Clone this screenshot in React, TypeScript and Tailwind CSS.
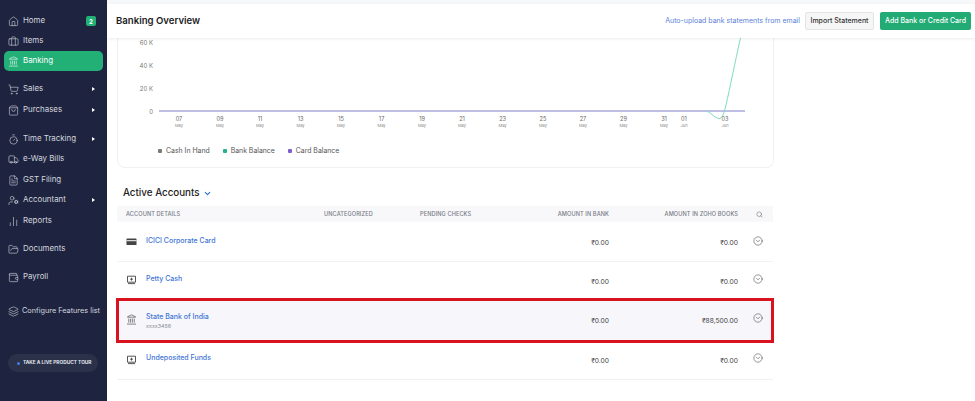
import React from "react";
import {
  Home, Briefcase, Landmark, ShoppingCart, ShoppingBag, Timer, Truck, FileText, UserCog,
  ChartNoAxesColumn, FolderOpen, Wallet, Layers, ChevronDown, Search, CircleChevronDown,
} from "lucide-react";

const nav = [
  { label: "Home", icon: Home, mt: "mt-[10px]", badge: true },
  { label: "Items", icon: Briefcase, mt: "mt-0" },
  { label: "Banking", icon: Landmark, mt: "mt-0", active: true },
  { label: "Sales", icon: ShoppingCart, mt: "mt-[8px]", arrow: true },
  { label: "Purchases", icon: ShoppingBag, mt: "mt-[1px]", arrow: true },
  { label: "Time Tracking", icon: Timer, mt: "mt-[9px]", arrow: true },
  { label: "e-Way Bills", icon: Truck, mt: "mt-0" },
  { label: "GST Filing", icon: FileText, mt: "mt-[1px]" },
  { label: "Accountant", icon: UserCog, mt: "mt-0", arrow: true },
  { label: "Reports", icon: ChartNoAxesColumn, mt: "mt-[1px]" },
  { label: "Documents", icon: FolderOpen, mt: "mt-[8px]" },
  { label: "Payroll", icon: Wallet, mt: "mt-[8px]" },
  { label: "Configure Features list", icon: Layers, mt: "mt-[14px]", small: true },
];

function Sidebar() {
  return (
    <aside className="w-[107px] h-full shrink-0 bg-[#1e2440] px-[4px] pt-[1px] flex flex-col text-[#d3d6df]">
      {nav.map((n) => {
        const I = n.icon;
        return (
          <div
            key={n.label}
            className={`${n.mt} h-[20px] flex items-center pl-[4px] pr-[7px] rounded-[5px] ${n.small ? "text-[7.3px]" : "text-[7.9px]"} whitespace-nowrap ${n.active ? "bg-[#22b077] text-white" : ""}`}
          >
            <I size={11} strokeWidth={1.3} className="shrink-0" />
            <span className={`${n.small ? "ml-[3px]" : "ml-[4px]"} flex-1`}>{n.label}</span>
            {n.badge && (
              <span className="w-[10px] h-[10px] rounded-[2px] bg-[#22b077] text-white text-[6px] font-bold flex items-center justify-center">2</span>
            )}
            {n.arrow && <span className="w-0 h-0 mr-[1px] border-y-[2px] border-y-transparent border-l-[3px] border-l-white" />}
          </div>
        );
      })}
      <div className="mt-[33px] mx-[4px] h-[18px] w-[90px] rounded-full bg-[#2a3149] flex items-center pl-[9px] text-[4.8px] font-bold text-[#e3e6ee] whitespace-nowrap">
        <span className="w-[3px] h-[3px] rounded-full bg-[#3f7fe8] mr-[3px]" />
        TAKE A LIVE PRODUCT TOUR
      </div>
    </aside>
  );
}

function Chart() {
  const labels = [
    [178, "07", "May"], [219, "09", "May"], [259, "11", "May"], [299.6, "13", "May"], [340, "15", "May"],
    [380.6, "17", "May"], [421, "19", "May"], [461, "21", "May"], [501.6, "23", "May"], [542, "25", "May"],
    [582, "27", "May"], [622.5, "29", "May"], [663, "31", "May"], [683, "01", "Jun"], [724, "03", "Jun"],
  ] as const;
  return (
    <svg viewBox="117 38 656 92" width="656" height="92" className="block">
      {[["60 K", 45], ["40 K", 68], ["20 K", 91], ["0", 114]].map(([t, y]) => (
        <text key={t as string} x="152" y={y as number} textAnchor="end" fontSize="6" fill="#777">{t}</text>
      ))}
      <path d="M158 111H744" stroke="#7f7cc9" strokeWidth="1" fill="none" />
      <path d="M706 111C711 114 714 118 718 118.5C721 118.8 723 114 725 105C729 88 734 62 739.5 38" stroke="#7fdcbc" strokeWidth="1" fill="none" />
      {labels.map(([x, d, m]) => (
        <g key={d + m}>
          <text x={x} y="121" textAnchor="middle" fontSize="5.6" fill="#666">{d}</text>
          <text x={x} y="127" textAnchor="middle" fontSize="4" fill="#888">{m}</text>
        </g>
      ))}
    </svg>
  );
}

function CashIcon() {
  return (
    <svg width="11" height="11" viewBox="0 0 11 11" fill="none" stroke="#444" strokeWidth="0.9">
      <path d="M1.5 2.2H9.5V8.2H1.5Z" />
      <path d="M2 9.6H9" />
      <path d="M5.5 3.8V6.6M4.1 5.2H6.9" />
    </svg>
  );
}

function CardIcon() {
  return (
    <svg width="11" height="11" viewBox="0 0 11 11">
      <rect x="0.5" y="2.5" width="10" height="6.5" rx="0.6" fill="#444" />
      <rect x="0.5" y="4.2" width="10" height="1" fill="#fff" />
    </svg>
  );
}

const rows = [
  { name: "ICICI Corporate Card", kind: "card", box: "h-[40px] pt-[13px] border-b border-[#f0f1f4]", iconMt: "mt-[1px]", amtMt: "mt-[2px]", chevMt: "mt-[1px]", bank: "₹0.00", books: "₹0.00" },
  { name: "Petty Cash", kind: "cash", box: "h-[36px] pt-[11px]", iconMt: "mt-[1px]", amtMt: "mt-[3px]", chevMt: "mt-[1px]", bank: "₹0.00", books: "₹0.00" },
  { name: "State Bank of India", sub: "xxxx3456", kind: "bank", box: "h-[43px] my-px pt-[12px] outline-[3px] outline-offset-[-2px] outline-[#d8121f] bg-[#f6f6fb]", iconMt: "mt-[3px]", amtMt: "mt-[4px]", chevMt: "mt-[2px]", bank: "₹0.00", books: "₹88,500.00" },
  { name: "Undeposited Funds", kind: "cash", box: "h-[37px] pt-[9px] border-b border-[#f0f1f4]", iconMt: "mt-[2px]", amtMt: "mt-[3px]", chevMt: "mt-[1px]", bank: "₹0.00", books: "₹0.00" },
];

function RowIcon({ kind }: { kind: string }) {
  if (kind === "card") return <CardIcon />;
  if (kind === "bank") return <Landmark size={11} strokeWidth={1.3} className="text-[#333]" />;
  return <CashIcon />;
}

const grid = "grid grid-cols-[207px_96px_110px_79px_129px_35px]";

function Table() {
  return (
    <div className="w-[656px] mt-[6px]">
      <div className={`${grid} h-[16px] items-center bg-[#f8f8fa] text-[5.6px] font-medium text-[#777b85] tracking-[0.1px]`}>
        <div className="pl-[9px]">ACCOUNT DETAILS</div>
        <div>UNCATEGORIZED</div>
        <div>PENDING CHECKS</div>
        <div className="text-right">AMOUNT IN BANK</div>
        <div className="text-right">AMOUNT IN ZOHO BOOKS</div>
        <div className="flex justify-center pl-[8px]"><Search size={7} className="text-[#777]" /></div>
      </div>
      {rows.map((r) => (
        <div key={r.name} className={`${grid} ${r.box}`}>
          <div className="flex items-start pl-[9px]">
            <span className={`${r.iconMt} w-[20px]`}><RowIcon kind={r.kind} /></span>
            <div className="leading-[12px]">
              <div className="text-[7px] font-medium text-[#3f75d6] whitespace-nowrap">{r.name}</div>
              {r.sub && <div className="text-[5.4px] leading-[7px] text-[#8a8d96]">{r.sub}</div>}
            </div>
          </div>
          <div />
          <div />
          <div className={`${r.amtMt} text-right text-[6.7px] leading-[12px] text-[#444]`}>{r.bank}</div>
          <div className={`${r.amtMt} text-right text-[6.7px] leading-[12px] text-[#444]`}>{r.books}</div>
          <div className="flex justify-center pl-[5px]">
            <CircleChevronDown size={10} strokeWidth={1.2} className={`${r.chevMt} text-[#333]`} />
          </div>
        </div>
      ))}
    </div>
  );
}

export default function App() {
  return (
    <div className="w-[975px] h-[401px] overflow-hidden flex bg-white font-['Inter','Noto_Sans',sans-serif]">
      <Sidebar />
      <main className="flex-1 min-w-0 flex flex-col">
        <div className="h-[4px] bg-[#f7f8fa]" />
        <header className="relative z-10 h-[34px] flex items-center pl-[9px] pr-[4px] bg-white shadow-[0_1px_3px_rgba(0,0,0,0.08)]">
          <h1 className="text-[9.6px] font-semibold text-[#1c1c24] flex-1">Banking Overview</h1>
          <a className="text-[7px] text-[#5b82d8] mr-[5px]">Auto-upload bank statements from email</a>
          <button className="w-[69px] h-[18px] rounded-[2px] bg-[#f6f6f6] border border-[#e4e4e6] text-[7px] font-medium text-[#333]">Import Statement</button>
          <button className="ml-[6px] w-[91px] h-[18px] rounded-[2px] bg-[#22ab75] text-[7px] font-medium text-white">Add Bank or Credit Card</button>
        </header>
        <div className="pl-[10px]">
          <section className="w-[657px] h-[130px] border border-t-0 border-[#f1f1f4] rounded-b-[8px]">
            <Chart />
            <div className="mt-[16px] pl-[40px] flex items-center text-[6.9px] text-[#555] leading-[10px]">
              <span className="w-[4px] h-[4px] rounded-[1px] bg-[#7a7a7a] mr-[4px]" />Cash In Hand
              <span className="w-[4px] h-[4px] rounded-[1px] bg-[#22b58a] ml-[13px] mr-[4px]" />Bank Balance
              <span className="w-[4px] h-[4px] rounded-[1px] bg-[#7d5fd0] ml-[13px] mr-[4px]" />Card Balance
            </div>
          </section>
          <div className="mt-[18px] pl-[6px] h-[14px] flex items-center text-[9.8px] font-medium text-[#222]">
            Active Accounts
            <ChevronDown size={9} strokeWidth={3} className="ml-[3px] text-[#2a6fc9]" />
          </div>
          <Table />
        </div>
      </main>
    </div>
  );
}
